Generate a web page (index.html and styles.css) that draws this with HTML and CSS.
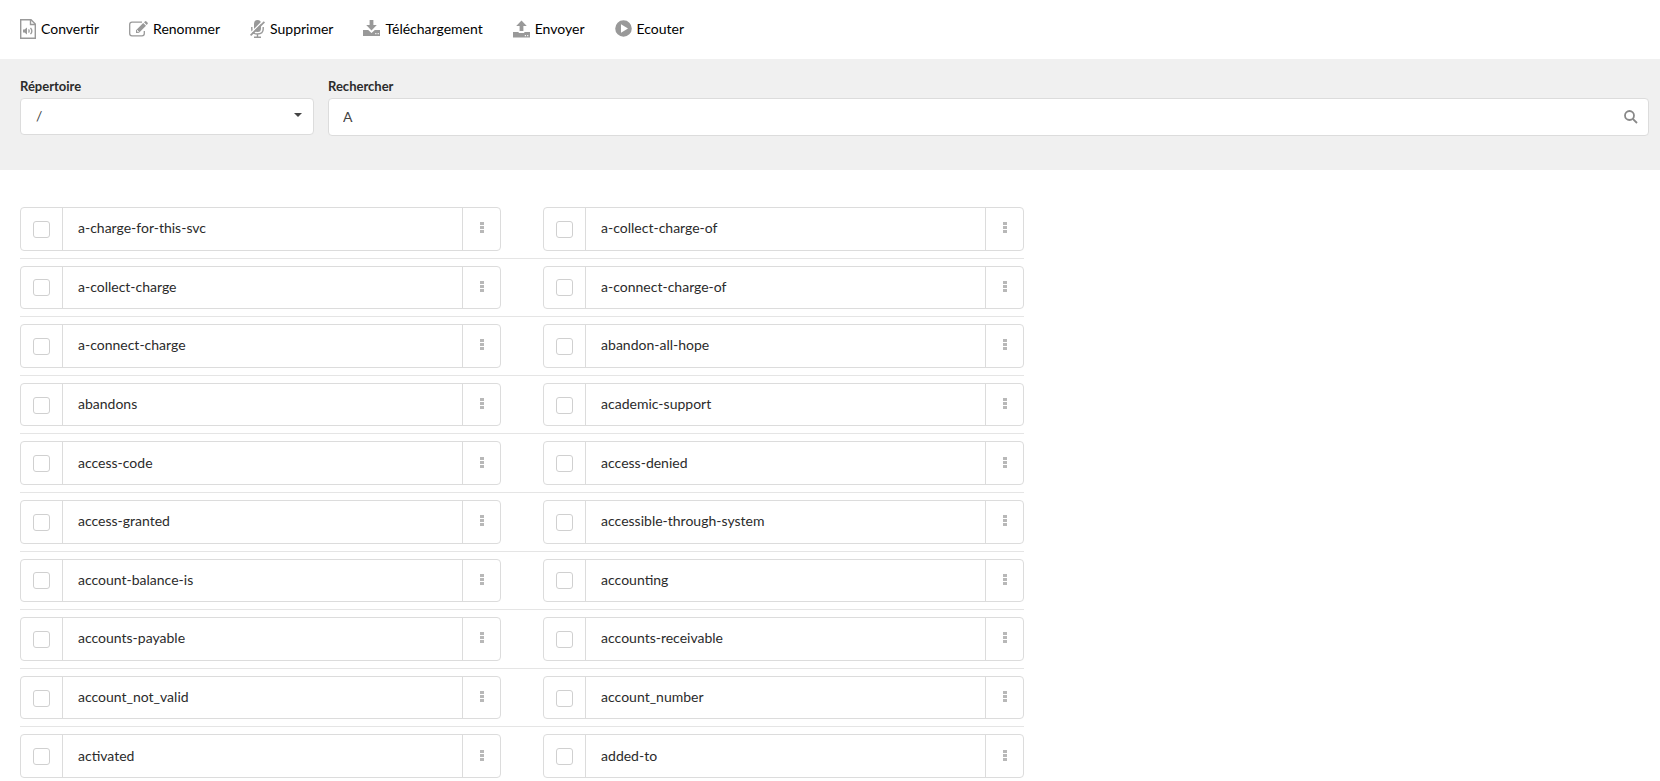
FILE: index.html
```html
<!DOCTYPE html>
<html lang="fr">
<head>
<meta charset="utf-8">
<title>Fichiers audio</title>
<link rel="stylesheet" href="styles.css">
</head>
<body>
<header class="toolbar">
  <button type="button" class="tool">
    <svg width="16" height="20" viewBox="0 0 16 20" fill="none" stroke="currentColor" stroke-width="1.4"><path d="M.7.7H11L15.3 5v14.2H.7zM10.500.7V5.500h4.800"/><path d="M3 10.500h1.500L7 8.500v7l-2.500-2H3z" fill="currentColor" stroke="none"/><path d="M8.600 10.300q1.300 1.700 0 3.400M10.500 8.800q2.700 3.200 0 6.400" stroke-width="1.300"/></svg>
    Convertir
  </button>
  <button type="button" class="tool">
    <svg width="19" height="16" viewBox="0 0 19 16"><path d="M13 1.200H3Q.7 1.200.7 3.500v9Q.7 14.800 3 14.800h10q2.300 0 2.300-2.300V10" fill="none" stroke="currentColor" stroke-width="1.300"/><path d="M7 9.300 14.200 2l2.800 2.800-7.200 7.200H7zM15 1.300 16.200.2q.5-.4 1 0l1.500 1.600q.4.500 0 1l-1 1.200z" fill="currentColor"/><path d="M8.500 9v1.700h1.600" stroke="#fff" stroke-width=".8" fill="none"/></svg>
    Renommer
  </button>
  <button type="button" class="tool">
    <svg width="15" height="18" viewBox="0 0 15 18"><rect x="4" y="0" width="7" height="12" rx="3.500" fill="currentColor"/><path d="M1.800 7v2q0 5 5.700 5t5.700-5V7M7.500 14v3M4 17.200h7" fill="none" stroke="currentColor" stroke-width="1.400"/><path d="M-.4 14.300 13.200.8" stroke="#fff" stroke-width="1.500"/><path d="M.6 15.300 14.400 1.800" stroke="currentColor" stroke-width="1.700"/></svg>
    Supprimer
  </button>
  <button type="button" class="tool">
    <svg width="17" height="18" viewBox="0 1 18 18" preserveAspectRatio="none" fill="currentColor"><path d="M7 1h4v5h3.600L9 11.600 3.400 6H7z"/><path d="M0 11h5.500L9 14l3.500-3H18v6H0zM13 14v1.200h1.200V14zm2.500 0v1.200h1.200V14z" fill-rule="evenodd"/></svg>
    Téléchargement
  </button>
  <button type="button" class="tool">
    <svg width="17" height="18" viewBox="0 0 18 18" preserveAspectRatio="none" fill="currentColor"><path d="M7 11V6H3.400L9 .4 14.600 6H11v5z"/><path d="M0 12h6v1h6v-1h6v5.500H0zM12.500 15v1.200h1.200V15zm2.500 0v1.200h1.200V15z" fill-rule="evenodd"/></svg>
    Envoyer
  </button>
  <button type="button" class="tool">
    <svg width="17" height="17" viewBox="0 0 17 17" fill="currentColor"><path d="M8.500.2a8.300 8.300 0 1 0 0 16.600 8.300 8.300 0 0 0 0-16.600zM6 4.300l7 4.200-7 4.200z" fill-rule="evenodd"/></svg>
    Ecouter
  </button>
</header>

<form class="filters">
  <div class="field">
    <label for="dir">Répertoire</label>
    <div class="control">
      <select id="dir" class="select"><option>/</option></select>
      <svg class="caret" width="8" height="4" viewBox="0 0 8 4"><path d="M0 0h8L4 4z" fill="currentColor"/></svg>
    </div>
  </div>
  <div class="field field-wide">
    <label for="search">Rechercher</label>
    <div class="control">
      <input id="search" class="input" type="text" value="A">
      <svg class="lens" width="14" height="14" viewBox="0 0 14 14" fill="none" stroke="currentColor" stroke-width="1.800"><circle cx="5.500" cy="5.500" r="4.500"/><path d="M8.800 8.800 13 13"/></svg>
    </div>
  </div>
</form>

<main class="files" id="files"></main>
<script src="files.js"></script>
</body>
</html>
```
FILE: styles.css
```css
* {
  box-sizing: border-box;
}

body {
  margin: 0;
  min-height: 100vh;
  display: flex;
  flex-direction: column;
  background: #fff;
  color: #2b2b2b;
  font: 14px/20px Lato, sans-serif;
}

svg {
  display: block;
  flex: none;
}

button,
input,
select {
  font: inherit;
  color: inherit;
}

.toolbar {
  display: flex;
  gap: 30px;
  height: 59px;
  padding: 0 20px 2px;
}

.tool {
  display: flex;
  align-items: center;
  gap: 5px;
  padding: 0;
  border: 0;
  background: none;
  color: #000;
  cursor: pointer;
}

.tool svg {
  color: #999;
}

.filters {
  display: flex;
  gap: 14px;
  padding: 17px 11px 34px 20px;
  background: #f0f0f0;
}

.field {
  flex: 0 0 294px;
}

.field-wide {
  flex: 1;
}

.field label {
  display: block;
  margin-bottom: 2px;
  font-size: 13px;
  font-weight: 700;
}

.control {
  position: relative;
}

.select,
.input {
  display: block;
  width: 100%;
  height: 38px;
  padding: 0 40px 1px 14px;
  border: 1px solid #dcdcdc;
  border-radius: 4px;
  background: #fff;
  color: #444;
  appearance: none;
}

.select {
  height: 37px;
  padding-left: 15px;
}

.caret,
.lens {
  position: absolute;
  pointer-events: none;
}

.caret {
  top: 15px;
  right: 12px;
  color: #444;
}

.lens {
  top: 12px;
  right: 11px;
  color: #888;
}

.files {
  flex: 1;
  display: grid;
  grid-auto-rows: 1fr;
  row-gap: 15px;
  width: 62%;
  padding: 37px 5px 3px 20px;
}

.row {
  position: relative;
  display: grid;
  grid-template-columns: 1fr 1fr;
  column-gap: 42px;
}

.row + .row::before {
  content: "";
  position: absolute;
  top: -8px;
  left: 0;
  right: 0;
  height: 1px;
  background: #e5e5e5;
}

.file {
  display: grid;
  grid-template-columns: 41px 1fr 37px;
  min-height: 42px;
  border: 1px solid #dcdcdc;
  border-radius: 4px;
}

.pick {
  align-self: center;
  justify-self: center;
  appearance: none;
  width: 17px;
  height: 17px;
  margin: 1px 0 0;
  border: 1px solid #d0d0d0;
  border-radius: 3px;
  background: #fff;
}

.pick:checked {
  background: #999;
}

.name {
  display: flex;
  align-items: center;
  padding: 0 15px 1px;
  border: solid #dcdcdc;
  border-width: 0 1px;
}

.more {
  display: flex;
  align-items: center;
  justify-content: center;
  padding: 0 0 2px;
  border: 0;
  background: none;
  color: #b8b8b8;
  cursor: pointer;
}
```
FILE: files.js
```js
const names = [
  "a-charge-for-this-svc", "a-collect-charge-of",
  "a-collect-charge", "a-connect-charge-of",
  "a-connect-charge", "abandon-all-hope",
  "abandons", "academic-support",
  "access-code", "access-denied",
  "access-granted", "accessible-through-system",
  "account-balance-is", "accounting",
  "accounts-payable", "accounts-receivable",
  "account_not_valid", "account_number",
  "activated", "added-to"
];

const card = (name) => `
  <div class="file">
    <input class="pick" type="checkbox" id="${name}">
    <label class="name" for="${name}">${name}</label>
    <button class="more" type="button" aria-label="Options">
      <svg width="4" height="11" viewBox="0 0 4 11" fill="currentColor"><path d="M0 0h4v3H0zM0 4h4v3H0zM0 8h4v3H0z"/></svg>
    </button>
  </div>`;

let html = "";
for (let i = 0; i < names.length; i += 2) {
  html += `<div class="row">${card(names[i])}${card(names[i + 1])}</div>`;
}
document.getElementById("files").innerHTML = html;
```
